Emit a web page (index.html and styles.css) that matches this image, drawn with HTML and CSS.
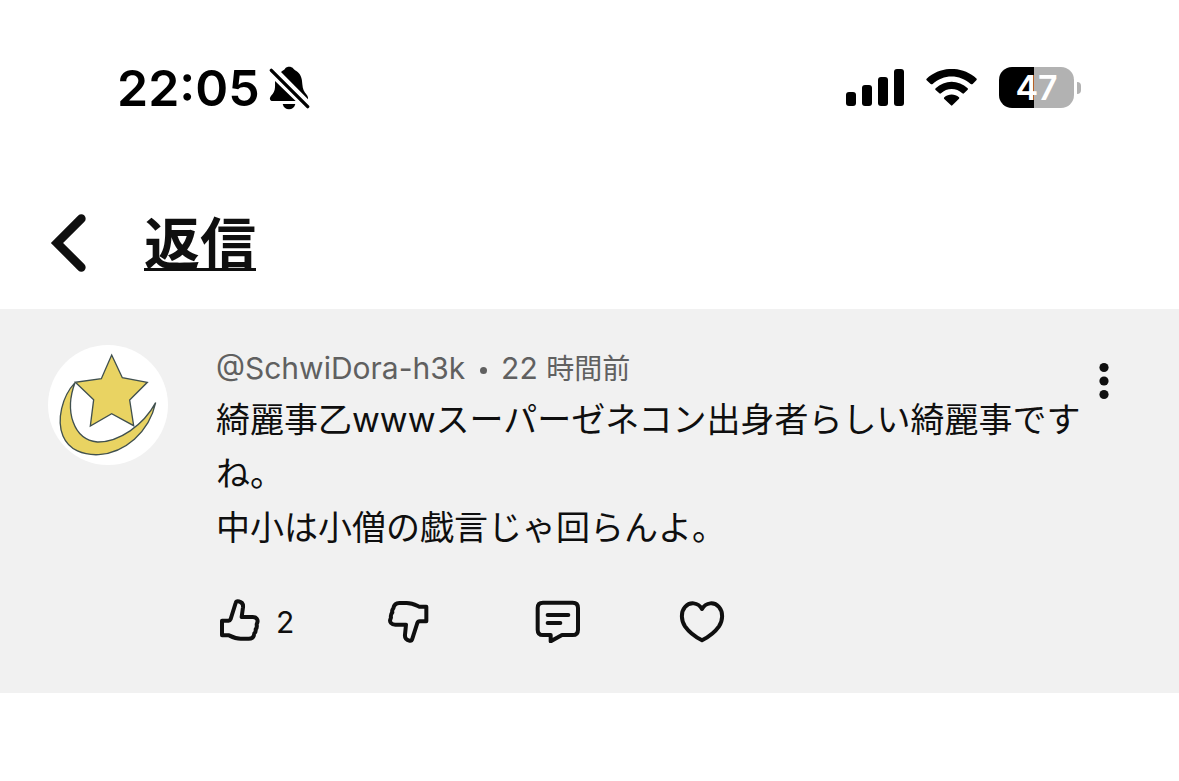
FILE: index.html
```html
<!DOCTYPE html>
<html lang="ja">
<head>
    <meta charset="UTF-8">
    <meta name="viewport" content="width=device-width, initial-scale=1.0">
    <title>返信</title>
    <link rel="stylesheet" href="styles.css">
</head>
<body>

<div class="status-bar">
    <div class="status-left">
        <span class="clock">22:05</span>
        <svg class="bell-icon" viewBox="507 48 123 132" aria-hidden="true">
            <path d="M543 66 C550 61 554 59 556 55 C561 49 574 49 579 55 C582 60 588 62 593 66 C604 76 606 87 607 103 C608 117 612 126 620 134 C623 138 625 143 624 148 Z"/>
            <path d="M525 93 L587 153 L517 153 C510 153 508 146 511 141 C514 134 522 130 524 119 C526 110 525 101 525 93 Z"/>
            <path d="M548 162 H586 C583 173 576 178 567 178 C558 178 551 173 548 162 Z"/>
            <path class="bell-slash" d="M514 61 L623 170"/>
        </svg>
    </div>
    <div class="status-right">
        <svg class="signal-icon" viewBox="48 57 174 111" aria-hidden="true">
            <rect x="48" y="126" width="30" height="42" rx="9"/>
            <rect x="96" y="105" width="30" height="63" rx="9"/>
            <rect x="144" y="81" width="30" height="87" rx="9"/>
            <rect x="192" y="57" width="30" height="111" rx="9"/>
        </svg>
        <svg class="wifi-icon" viewBox="288 57 153 111" aria-hidden="true">
            <path d="M290 86 C332 47 398 47 440 86 Q441 89 439 91 L428 102 Q425 104 422 102 C389 72 340 72 308 102 Q305 104 302 102 L290 91 Q288 88 290 86 Z"/>
            <path d="M317 115 C344 89 386 89 413 115 Q415 117 413 119 L402 130 Q400 132 397 130 C379 113 351 113 333 130 Q330 132 328 130 L316 119 Q315 117 317 115 Z"/>
            <path d="M343 142 C356 131 374 131 387 142 Q389 144 387 146 L367 166 Q365 168 363 166 L342 146 Q341 144 343 142 Z"/>
        </svg>
        <div class="battery">
            <span class="battery-level">47</span>
            <span class="battery-tip"></span>
        </div>
    </div>
</div>

<header class="header">
    <button class="back-button" aria-label="戻る">
        <svg viewBox="60 42 108 174" aria-hidden="true">
            <path d="M154 56 L81 129 L154 202"/>
        </svg>
    </button>
    <h1 class="title">返信</h1>
</header>

<main class="comment">
    <svg class="avatar" viewBox="24 30 360 360" aria-hidden="true">
        <circle cx="204" cy="210" r="180"/>
        <path d="M105 143 C66 185 49 255 69 303 C87 346 131 361 176 359 C254 353 327 293 347 203 C311 270 237 322 172 321 C100 314 73 228 105 143 Z"/>
        <path d="M215 60 L247 128 L322 142 L269 195 L281 272 L215 236 L151 273 L161 194 L106 142 L184 131 Z"/>
    </svg>
    <div class="comment-body">
        <div class="comment-meta">@SchwiDora-h3k <span class="dot"></span> 22 <span class="time-unit">時間前</span></div>
        <p class="comment-text">綺麗事乙wwwスーパーゼネコン出身者らしい綺麗事ですね。<br>中小は小僧の戯言じゃ回らんよ。</p>
        <div class="actions">
            <button class="action" aria-label="高評価">
                <svg viewBox="48 36 138 138" aria-hidden="true">
                    <path d="M66 107 H86 Q90 107 92 102 L107 54 Q109 47 115 49 C125 51 130 58 129 67 L125 96 H158 C169 96 175 104 172 113 Q170 117 170 119 Q172 127 167 133 Q168 141 163 145 C162 155 156 161 146 161 H122 C106 161 97 156 87 151 H66 Z"/>
                </svg>
                <span class="count">2</span>
            </button>
            <button class="action" aria-label="低評価">
                <svg viewBox="558 36 138 138" aria-hidden="true">
                    <path d="M679 109 H659 Q654 109 652 114 L637 161 Q635 168 629 167 C618 165 614 158 615 149 L618 119 H586 C574 119 568 111 571 103 Q573 99 573 97 Q571 89 577 82 Q575 75 580 70 C582 59 588 54 598 54 H620 C637 54 647 60 658 65 H679 Z"/>
                </svg>
            </button>
            <button class="action" aria-label="返信">
                <svg viewBox="42 36 138 138" aria-hidden="true">
                    <path d="M69 53 H158 Q174 53 174 69 V134 Q174 150 158 150 H126 L92 169 V150 H69 Q53 150 53 134 V69 Q53 53 69 53 Z"/>
                    <path d="M83 90 H145 M83 114 H121"/>
                </svg>
            </button>
            <button class="action" aria-label="ハート">
                <svg viewBox="477 36 138 138" aria-hidden="true">
                    <path d="M546 72 C534 51 509 50 495 66 C482 81 483 106 495 124 C507 141 525 155 546 166 C567 155 585 141 597 124 C609 106 610 81 597 66 C583 50 558 51 546 72 Z"/>
                </svg>
            </button>
        </div>
    </div>
    <button class="menu-button" aria-label="その他">
        <svg viewBox="0 0 10 38" aria-hidden="true">
            <circle cx="5" cy="5.5" r="4.6"/>
            <circle cx="5" cy="19" r="4.6"/>
            <circle cx="5" cy="32.5" r="4.6"/>
        </svg>
    </button>
</main>

</body>
</html>
```

FILE: styles.css
```css
* {
    box-sizing: border-box;
}
body {
    margin: 0;
    background-color: #fff;
    color: #0f0f0f;
    font-family: Inter, 'Noto Sans CJK JP', sans-serif;
}
svg {
    display: block;
    flex-shrink: 0;
}
button {
    padding: 0;
    border: none;
    background: none;
    color: inherit;
    font: inherit;
    cursor: pointer;
}

/* Status bar */
.status-bar {
    display: flex;
    justify-content: space-between;
    align-items: center;
    height: 175px;
    padding: 0 98px 0 117px;
    color: #000;
}
.status-left {
    display: flex;
    align-items: center;
    gap: 9px;
}
.clock {
    font-size: 50px;
    font-weight: 600;
    line-height: 60px;
}
.bell-icon {
    width: 41px;
    height: 44px;
}
.bell-slash {
    fill: none;
    stroke: #000;
    stroke-width: 10;
    stroke-linecap: round;
}
.status-right {
    display: flex;
    align-items: center;
    gap: 22px;
}
.signal-icon {
    width: 58px;
    height: 37px;
}
.wifi-icon {
    width: 51px;
    height: 37px;
}
.battery {
    display: flex;
    align-items: center;
    gap: 3px;
}
.battery-level {
    width: 75px;
    border-radius: 13px;
    background: linear-gradient(to right, #000 47%, #b2b2b2 47%);
    color: #fff;
    font-size: 34px;
    font-weight: 600;
    line-height: 41px;
    text-align: center;
}
.battery-tip {
    width: 4px;
    height: 12px;
    border-radius: 0 6px 6px 0;
    background-color: #b2b2b2;
}

/* Header */
.header {
    display: flex;
    align-items: center;
    gap: 58px;
    height: 134px;
    padding: 2px 50px 0;
}
.back-button svg {
    width: 36px;
    height: 58px;
    fill: none;
    stroke: #0f0f0f;
    stroke-width: 26;
    stroke-linecap: round;
}
.title {
    margin: 0;
    padding-top: 2px;
    font-size: 56px;
    font-weight: 700;
    line-height: 72px;
    text-decoration: underline;
    text-decoration-thickness: 3px;
    text-underline-offset: 4px;
    text-decoration-skip-ink: none;
}

/* Comment */
.comment {
    display: flex;
    align-items: flex-start;
    padding: 36px 70px 50px 48px;
    background-color: #f1f1f1;
}
.avatar {
    width: 120px;
    height: 120px;
    fill: #e9d362;
    stroke: #40504f;
    stroke-width: 4;
}
.avatar circle {
    fill: #fff;
    stroke: none;
}
.comment-body {
    flex: 1;
    margin-left: 48px;
}
.comment-meta {
    height: 48px;
    color: #606060;
    font-size: 30px;
    line-height: 46px;
}
.time-unit {
    font-size: 28px;
}
.dot {
    display: inline-block;
    width: 7px;
    height: 7px;
    margin: 0 6px;
    border-radius: 50%;
    background-color: #606060;
    vertical-align: middle;
}
.comment-text {
    margin: 0;
    font-size: 34px;
    line-height: 54px;
}
.actions {
    display: grid;
    grid-template-columns: 170px 148px 145px auto;
    margin-top: 42px;
}
.action {
    display: flex;
    align-items: center;
    gap: 14px;
}
.action svg {
    width: 46px;
    height: 46px;
    fill: none;
    stroke: #0f0f0f;
    stroke-width: 12;
    stroke-linejoin: round;
    stroke-linecap: round;
}
.count {
    padding-top: 4px;
    font-size: 30px;
    line-height: 36px;
}
.menu-button {
    margin-top: 17px;
}
.menu-button svg {
    width: 10px;
    height: 38px;
    fill: #0f0f0f;
}
```
